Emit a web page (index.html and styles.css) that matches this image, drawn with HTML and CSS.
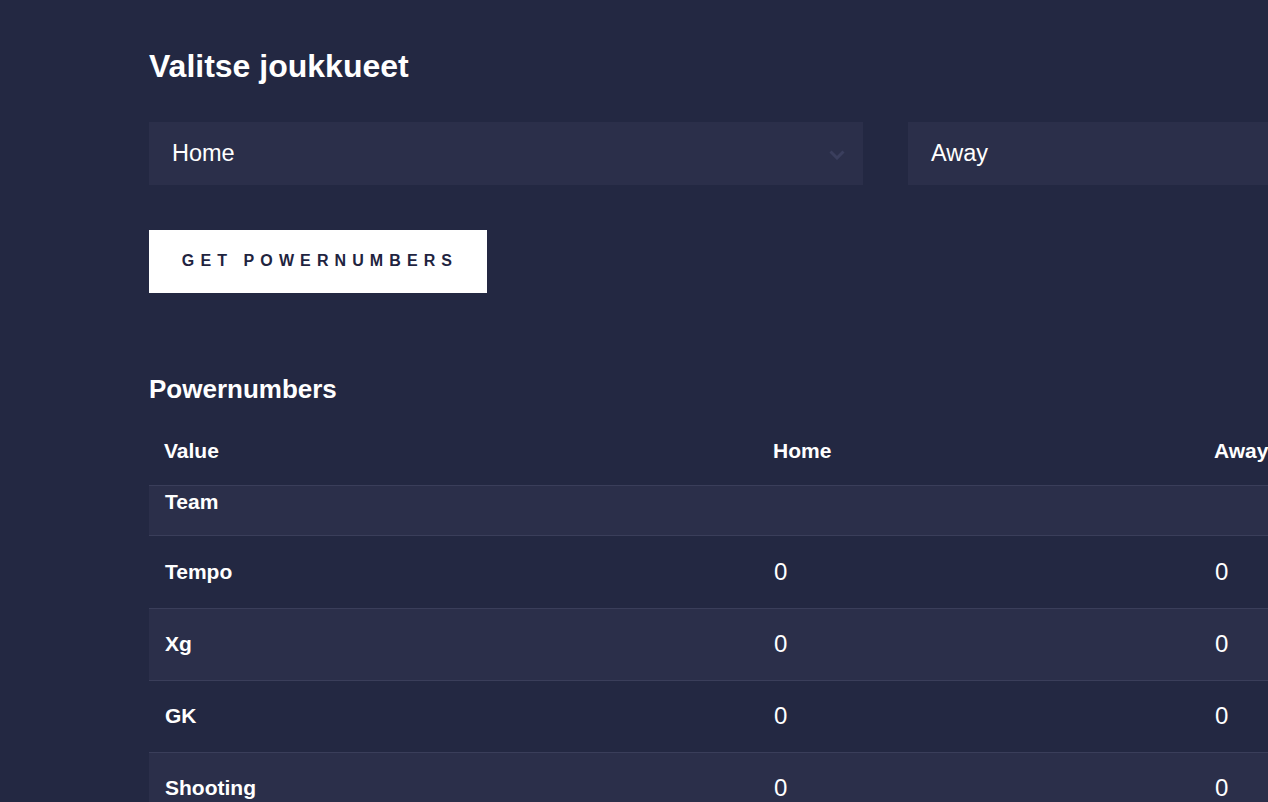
FILE: index.html
```html
<!DOCTYPE html>
<html lang="fi">
<head>
<meta charset="utf-8">
<title>Powernumbers</title>
<link rel="stylesheet" href="styles.css">
</head>
<body>
<main class="page">
  <h1 class="title">Valitse joukkueet</h1>
  <div class="selects">
    <div class="select">
      <span class="select-label">Home</span>
      <svg class="chevron" width="16" height="10" viewBox="0 0 16 10"><path d="M1.5 1.5 L8 8 L14.5 1.5" fill="none" stroke="#3a3e5d" stroke-width="3"/></svg>
    </div>
    <div class="select">
      <span class="select-label">Away</span>
      <svg class="chevron" width="16" height="10" viewBox="0 0 16 10"><path d="M1.5 1.5 L8 8 L14.5 1.5" fill="none" stroke="#3a3e5d" stroke-width="3"/></svg>
    </div>
  </div>
  <button class="btn" type="button">GET POWERNUMBERS</button>
  <h2 class="subtitle">Powernumbers</h2>
  <table class="pn-table">
    <colgroup>
      <col class="c1"><col class="c2"><col class="c3">
    </colgroup>
    <thead>
      <tr><th>Value</th><th>Home</th><th>Away</th></tr>
    </thead>
    <tbody>
      <tr class="team-row"><td class="label">Team</td><td></td><td></td></tr>
      <tr class="first"><td class="label">Tempo</td><td class="num">0</td><td class="num">0</td></tr>
      <tr class="alt"><td class="label">Xg</td><td class="num">0</td><td class="num">0</td></tr>
      <tr><td class="label">GK</td><td class="num">0</td><td class="num">0</td></tr>
      <tr class="alt"><td class="label">Shooting</td><td class="num">0</td><td class="num">0</td></tr>
    </tbody>
  </table>
</main>
</body>
</html>
```
FILE: styles.css
```css
html, body {
  margin: 0;
  padding: 0;
  background: #232842;
  overflow: hidden;
}
body {
  font-family: "Liberation Sans", Arial, sans-serif;
  color: #ffffff;
}
.page {
  width: 1473px;
  padding: 48px 0 0 149px;
}
.title {
  margin: 0 0 38px;
  font-size: 32px;
  line-height: 36px;
  font-weight: 700;
}
.selects {
  display: flex;
  gap: 45px;
}
.select {
  flex: 1;
  height: 63px;
  background: #2b2f4a;
  display: flex;
  align-items: center;
  justify-content: space-between;
  padding: 0 18px 0 23px;
  box-sizing: border-box;
}
.select-label {
  font-size: 23.5px;
}
.chevron {
  display: block;
  margin-top: 2px;
}
.btn {
  display: block;
  margin-top: 45px;
  width: 338px;
  height: 63px;
  border: 0;
  background: #ffffff;
  color: #1f2440;
  font-family: "Liberation Sans", Arial, sans-serif;
  font-size: 16px;
  font-weight: 700;
  letter-spacing: 6.1px;
  padding: 0 0 2px 4px;
  text-align: center;
}
.subtitle {
  margin: 81px 0 10px;
  font-size: 26px;
  line-height: 30px;
  font-weight: 700;
}
.pn-table {
  width: 1473px;
  border-collapse: collapse;
  table-layout: fixed;
}
.c1 { width: 609px; }
.c2 { width: 441px; }
.c3 { width: 423px; }
.pn-table th {
  text-align: left;
  font-size: 21px;
  font-weight: 700;
  height: 71px;
  padding: 3px 15px 0;
  box-sizing: border-box;
  vertical-align: middle;
  border-bottom: 1px solid #3a3e5a;
}
.pn-table td {
  height: 71px;
  padding: 0 15px;
  vertical-align: middle;
  border-bottom: 1px solid #3a3e5a;
}
.pn-table .first td {
  height: 72px;
}
.pn-table .label {
  font-size: 21px;
  font-weight: 700;
  padding-left: 16px;
}
.pn-table .num {
  font-size: 24px;
  padding-left: 16px;
}
.team-row td {
  height: auto;
  vertical-align: top;
  padding-top: 4px;
  padding-bottom: 21px;
  line-height: 24px;
  background: #2b2f4a;
}
.alt td {
  background: #2b2f4a;
}
```
